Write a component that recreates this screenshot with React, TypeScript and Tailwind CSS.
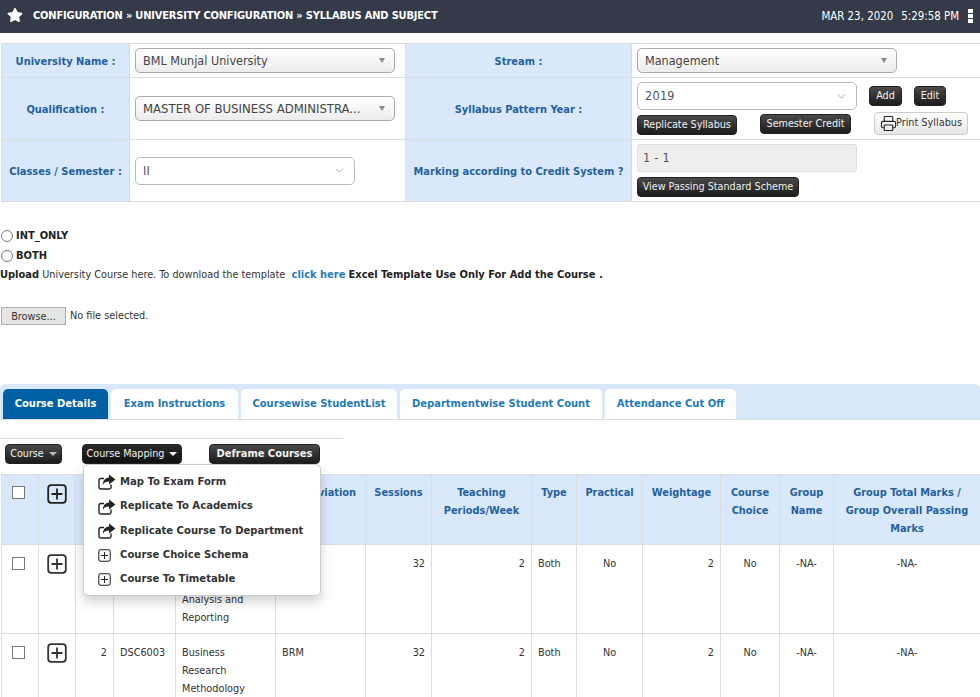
import { ReactNode } from "react";
import { FaStar } from "react-icons/fa";
import { ChevronDown, Printer } from "lucide-react";

const labelCell = "bg-[#dae8fc] text-[#22619c] text-[11px] font-bold text-center border border-[#dddddd] border-r-[#cfdcf0] align-middle p-0 pt-[3px]";
const headCell = "bg-[#dae8fc] text-[#22619c] text-[10.9px] font-bold text-center align-top border border-[#dddddd] pt-[9px] px-[6px] pb-0 leading-[18px]";
const bodyCell = "align-top border border-[#dddddd] pt-[10px] px-[6px] pb-0 leading-[18px] text-[#333333]";

function DarkButton({ children, className = "" }: { children: ReactNode; className?: string }) {
    return (
        <button className={`inline-flex items-center justify-center h-5 pt-px rounded-[4px] text-[#f2f2f2] text-[10.7px] bg-gradient-to-b from-[#4a4a4a] to-[#1c1c1c] border border-[#222222] whitespace-nowrap ${className}`}>
            {children}
        </button>
    );
}

function GraySelect({ value, textClass = "text-[12.5px]" }: { value: string; textClass?: string }) {
    return (
        <div className={`flex items-center justify-between w-[260px] h-[25px] rounded-[5px] border border-[#aaaaaa] bg-gradient-to-b from-white to-[#ececec] pl-[7px] pr-[9px] text-[#444444] ${textClass}`}>
            <span className="whitespace-nowrap pt-px">{value}</span>
            <span className="w-0 h-0 border-l-[3.5px] border-r-[3.5px] border-t-[5px] border-l-transparent border-r-transparent border-t-[#888888]" />
        </div>
    );
}

function PlainSelect({ value }: { value: string }) {
    return (
        <div className="flex items-center justify-between w-[220px] h-[28px] rounded-[5px] border border-[#bbbbbb] bg-white pl-[7px] pr-[8px] text-[#555555] text-[12.5px] tracking-[0.3px]">
            <span className="pt-px">{value}</span>
            <ChevronDown size={13} strokeWidth={1} className="text-[#666666]" />
        </div>
    );
}

function Radio({ label }: { label: string }) {
    return (
        <div className="flex items-center h-5 text-[11px] font-bold text-[#222222]">
            <span className="w-3 h-3 ml-[1px] mr-[3px] mt-[2px] rounded-full border border-[#777777] bg-white" />
            <span className="pt-[2px]">{label}</span>
        </div>
    );
}

function PlusBox({ size, stroke }: { size: number; stroke: number }) {
    return (
        <svg width={size} height={size} viewBox="0 0 20 20" fill="none" stroke="currentColor" strokeWidth={stroke} className="inline-block">
            <rect x="1.2" y="1.2" width="17.6" height="17.6" rx="3" />
            <path d="M10 4.5v11M4.5 10h11" />
        </svg>
    );
}

function ShareBox() {
    return (
        <svg width="18" height="16" viewBox="0 0 18 16" className="inline-block">
            <path d="M13 10.5v2.7a1.8 1.8 0 0 1-1.8 1.8H2.8A1.8 1.8 0 0 1 1 13.2V6.3a1.8 1.8 0 0 1 1.8-1.8H6" fill="none" stroke="currentColor" strokeWidth="1.4" />
            <path d="M11 0.5L17.5 5.5L11 10.5V7.6C8 7.6 6 8.4 4.8 11C4.8 6.8 7 3.6 11 3.4Z" fill="currentColor" />
        </svg>
    );
}

function MenuItem({ icon, label }: { icon: ReactNode; label: string }) {
    return (
        <div className="flex items-center h-[24.4px] pl-[14px] text-[11.2px] font-bold text-[#333333]">
            <span className="w-[22px] flex items-center text-[#222222]">{icon}</span>
            {label}
        </div>
    );
}

const tabs = ["Exam Instructions", "Coursewise StudentList", "Departmentwise Student Count", "Attendance Cut Off"];
const tabWidths = ["w-[127px]", "w-[156px]", "w-[202px]", "w-[131px]"];

function CourseRow({ sr, code, name, abbr }: { sr?: string; code?: string; name: string[]; abbr?: string }) {
    return (
        <tr className="h-[89px]">
            <td className={`${bodyCell} !pl-0 !pr-[4px] !pt-[12px] text-center`}>
                <span className="inline-block w-[13px] h-[13px] border border-[#777777] bg-white" />
            </td>
            <td className={`${bodyCell} !pl-0 !pr-[1px] !pt-[9px] text-center text-[#222222]`}>
                <PlusBox size={20} stroke={1.8} />
            </td>
            <td className={`${bodyCell} text-right`}>{sr}</td>
            <td className={bodyCell}>{code}</td>
            <td className={bodyCell}>
                {name.length === 2 && <div className="h-[36px]" />}
                {name.map((n) => (
                    <div key={n}>{n}</div>
                ))}
            </td>
            <td className={bodyCell}>{abbr}</td>
            <td className={`${bodyCell} text-right`}>32</td>
            <td className={`${bodyCell} text-right`}>2</td>
            <td className={bodyCell}>Both</td>
            <td className={`${bodyCell} text-center`}>No</td>
            <td className={`${bodyCell} text-right`}>2</td>
            <td className={`${bodyCell} text-center`}>No</td>
            <td className={`${bodyCell} text-center`}>-NA-</td>
            <td className={`${bodyCell} text-center`}>-NA-</td>
        </tr>
    );
}

export default function App() {
    return (
        <div className="relative h-[697px] w-[980px] overflow-hidden bg-white text-[10.8px] text-[#333333] font-['DejaVu_Sans_Condensed','DejaVu_Sans',sans-serif]">
            {/* top bar */}
            <div className="flex items-center justify-between h-[33px] bg-[#343a48] text-white pl-[7px] pr-[7px]">
                <div className="flex items-center text-[11px] tracking-[-0.19px] font-bold">
                    <FaStar size={16} className="mr-[10px] -mt-[3px]" />
                    CONFIGURATION » UNIVERSITY CONFIGURATION » SYLLABUS AND SUBJECT
                </div>
                <div className="flex items-center text-[11.4px]">
                    <span>MAR 23, 2020</span>
                    <span className="ml-[8px]">5:29:58 PM</span>
                    <svg width="5" height="14" viewBox="0 0 5 14" fill="currentColor" className="ml-[9px] -mt-[1px]">
                        <rect width="5" height="4" />
                        <rect y="5" width="5" height="4" />
                        <rect y="10" width="5" height="4" />
                    </svg>
                </div>
            </div>

            {/* filter form */}
            <table className="mt-[10px] ml-[1px] w-[980px] table-fixed border-collapse">
                <colgroup>
                    <col className="w-[128px]" />
                    <col className="w-[276px]" />
                    <col className="w-[226px]" />
                    <col />
                </colgroup>
                <tbody>
                    <tr className="h-[34px]">
                        <td className={labelCell}>University Name :</td>
                        <td className="border border-[#dddddd] pl-[5px]">
                            <GraySelect value="BML Munjal University" />
                        </td>
                        <td className={labelCell}>Stream :</td>
                        <td className="border border-[#dddddd] pl-[5px]">
                            <GraySelect value="Management" />
                        </td>
                    </tr>
                    <tr className="h-[62px]">
                        <td className={labelCell}>Qualification :</td>
                        <td className="border border-[#dddddd] pl-[5px] align-top pt-[18px]">
                            <GraySelect value="MASTER OF BUSINESS ADMINISTRA..." textClass="text-[13px]" />
                        </td>
                        <td className={labelCell}>Syllabus Pattern Year :</td>
                        <td className="border border-[#dddddd] pl-[5px] align-top pt-[4px]">
                            <div className="flex items-center">
                                <PlainSelect value="2019" />
                                <DarkButton className="ml-[12px] w-[33px]">Add</DarkButton>
                                <DarkButton className="ml-[12px] w-[32px]">Edit</DarkButton>
                            </div>
                            <div className="flex items-start mt-[4px]">
                                <DarkButton className="w-[100px] mt-[1px]">Replicate Syllabus</DarkButton>
                                <DarkButton className="w-[91px] ml-[23px]">Semester Credit</DarkButton>
                                <button className="flex items-center justify-center ml-[23px] -mt-[2px] w-[94px] h-[23px] rounded-[4px] border border-[#cccccc] bg-gradient-to-b from-white to-[#e6e6e6] text-[#333333] whitespace-nowrap">
                                    <Printer size={17} strokeWidth={1.5} className="text-[#222222] -mr-[1px]" />
                                    Print Syllabus
                                </button>
                            </div>
                        </td>
                    </tr>
                    <tr className="h-[62px]">
                        <td className={labelCell}>Classes / Semester :</td>
                        <td className="border border-[#dddddd] pl-[5px]">
                            <PlainSelect value="II" />
                        </td>
                        <td className={`${labelCell} whitespace-nowrap`}>Marking according to Credit System ?</td>
                        <td className="border border-[#dddddd] pl-[5px] align-top pt-[4px]">
                            <div className="flex items-center w-[220px] h-[28px] rounded-[3px] border border-[#dddddd] bg-[#eeeeee] pl-[5px] pt-px text-[#555555] text-[12.5px] tracking-[0.3px]">1 - 1</div>
                            <DarkButton className="w-[162px] mt-[5px]">View Passing Standard Scheme</DarkButton>
                        </td>
                    </tr>
                </tbody>
            </table>

            {/* exam type + upload */}
            <div className="mt-[23px]">
                <Radio label="INT_ONLY" />
                <Radio label="BOTH" />
                <div className="h-5 pt-px leading-[18px] whitespace-nowrap">
                    <b className="text-[11px] text-[#222222]">Upload</b> University Course here. To download the template&nbsp; <b className="text-[11px] text-[#2a7ab8]">click here</b> <b className="text-[11px] text-[#222222]">Excel Template Use Only For Add the Course .</b>
                </div>
            </div>
            <div className="flex items-center mt-[22px]">
                <button className="w-[65px] h-[18px] ml-[1px] pt-px border border-[#aaaaaa] bg-[#e5e5e5] text-[#333333]">Browse...</button>
                <span className="ml-[4px] pt-px">No file selected.</span>
            </div>

            {/* tabs */}
            <div className="flex items-end mt-[59px] h-[36px] pl-[3px] gap-[3px] rounded-t-[5px] bg-[#dae8fc] border-b border-[#dddddd] text-[11.1px]">
                <div className="flex items-center justify-center w-[105px] h-[30px] pt-px rounded-t-[5px] bg-[#0060a3] text-white font-bold">Course Details</div>
                {tabs.map((t, i) => (
                    <div key={t} className={`flex items-center justify-center h-[30px] pt-px rounded-t-[5px] bg-white text-[#1f7ab8] font-bold ${tabWidths[i]}`}>
                        {t}
                    </div>
                ))}
            </div>

            <div className="w-[343px] mt-[18px] border-t border-[#dddddd]" />
            <div className="flex items-center h-[21px] mt-[4px] pl-[5px]">
                <DarkButton className="w-[57px]">
                    Course
                    <span className="ml-[5px] w-0 h-0 border-l-[4px] border-r-[4px] border-t-[4px] border-l-transparent border-r-transparent border-t-[#bbbbbb]" />
                </DarkButton>
                <DarkButton className="w-[100px] ml-[20px] !from-[#2a2a2a] !to-[#111111]">
                    Course Mapping
                    <span className="ml-[5px] w-0 h-0 border-l-[4px] border-r-[4px] border-t-[4px] border-l-transparent border-r-transparent border-t-white" />
                </DarkButton>
                <DarkButton className="w-[111px] ml-[27px] font-bold !text-[11px]">Deframe Courses</DarkButton>
            </div>

            {/* courses */}
            <table className="mt-[10px] ml-[1px] w-[980px] table-fixed border-collapse">
                <colgroup>
                    <col className="w-[37px]" />
                    <col className="w-[37px]" />
                    <col className="w-[38px]" />
                    <col className="w-[62px]" />
                    <col className="w-[100px]" />
                    <col className="w-[90px]" />
                    <col className="w-[66px]" />
                    <col className="w-[100px]" />
                    <col className="w-[45px]" />
                    <col className="w-[66px]" />
                    <col className="w-[78px]" />
                    <col className="w-[59px]" />
                    <col className="w-[54px]" />
                    <col />
                </colgroup>
                <thead>
                    <tr className="h-[70px]">
                        <th className={`${headCell} !pl-0 !pr-[4px] !pt-[11px]`}>
                            <span className="inline-block w-[13px] h-[13px] border border-[#777777] bg-white" />
                        </th>
                        <th className={`${headCell} !px-0 !pt-[9px] !text-[#222222]`}>
                            <PlusBox size={20} stroke={1.8} />
                        </th>
                        <th className={headCell} />
                        <th className={headCell} />
                        <th className={headCell} />
                        <th className={headCell}>Abbreviation</th>
                        <th className={headCell}>Sessions</th>
                        <th className={headCell}>Teaching Periods/Week</th>
                        <th className={headCell}>Type</th>
                        <th className={headCell}>Practical</th>
                        <th className={headCell}>Weightage</th>
                        <th className={headCell}>Course Choice</th>
                        <th className={headCell}>Group Name</th>
                        <th className={headCell}>Group Total Marks / Group Overall Passing Marks</th>
                    </tr>
                </thead>
                <tbody>
                    <CourseRow name={["Analysis and", "Reporting"]} />
                    <CourseRow sr="2" code="DSC6003" name={["Business", "Research", "Methodology"]} abbr="BRM" />
                </tbody>
            </table>

            {/* open dropdown */}
            <div className="absolute left-[83px] top-[464px] w-[238px] h-[132px] pt-[5px] rounded-[5px] border border-[#cccccc] bg-white shadow-[0_6px_12px_rgba(0,0,0,0.18)]">
                <MenuItem icon={<ShareBox />} label="Map To Exam Form" />
                <MenuItem icon={<ShareBox />} label="Replicate To Academics" />
                <MenuItem icon={<ShareBox />} label="Replicate Course To Department" />
                <MenuItem icon={<PlusBox size={13} stroke={1.6} />} label="Course Choice Schema" />
                <MenuItem icon={<PlusBox size={13} stroke={1.6} />} label="Course To Timetable" />
            </div>
        </div>
    );
}
